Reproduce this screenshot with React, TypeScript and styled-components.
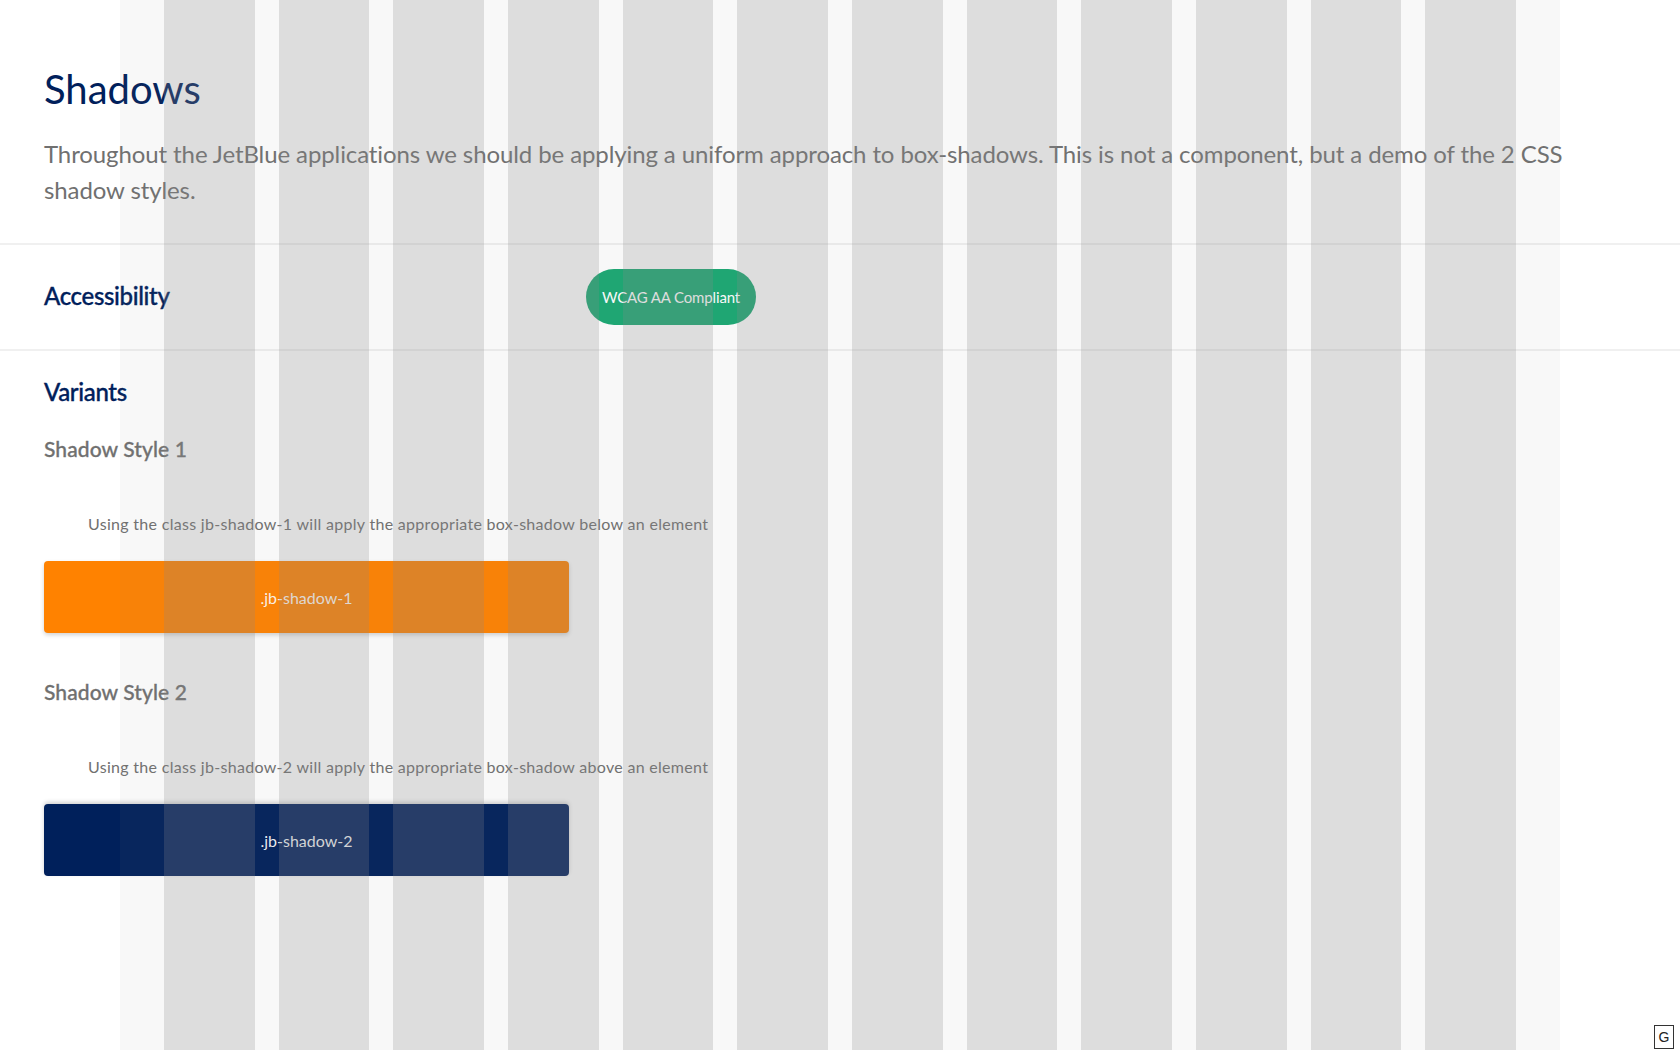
import * as React from 'react'
import styled, { createGlobalStyle } from 'styled-components'

const navy = '#00205b'
const gray = '#707070'

const GlobalStyle = createGlobalStyle`
  html, body {
    margin: 0;
    padding: 0;
    background: #fff;
    font-family: Lato, "Open Sans", "Liberation Sans", sans-serif;
  }
  * { box-sizing: border-box; }
`

const Page = styled.div`
  min-height: 1050px;
`

const Header = styled.header`
  padding: 64px 44px 35px 44px;
`

const Title = styled.h1`
  margin: 0;
  font-size: 40px;
  line-height: 50px;
  font-weight: 400;
  color: ${navy};
`

const Lead = styled.p`
  margin: 22px 0 0 0;
  max-width: 1560px;
  font-size: 24px;
  line-height: 36px;
  font-weight: 400;
  letter-spacing: -0.1px;
  color: ${gray};
`

const Divider = styled.hr`
  margin: 0;
  border: 0;
  height: 2px;
  background: #f0f0f0;
`

const AccessRow = styled.section`
  display: grid;
  grid-template-columns: 542px auto;
  align-items: center;
  padding: 24px 44px;
`

const SectionHeading = styled.h2<{ $lift?: boolean }>`
  margin: ${p => (p.$lift ? '-4px 0 0 0' : '0')};
  font-size: 24px;
  line-height: 29px;
  font-weight: 500;
  letter-spacing: -0.35px;
  -webkit-text-stroke: 0.35px ${navy};
  color: ${navy};
`

const Badge = styled.span`
  justify-self: start;
  display: inline-flex;
  align-items: center;
  height: 56px;
  padding: 0 16px;
  border-radius: 28px;
  background: #19a872;
  color: #fff;
  font-size: 15px;
  letter-spacing: -0.15px;
`

const Variants = styled.section`
  padding: 26px 44px 80px 44px;
`

const VariantBlock = styled.div<{ $first?: boolean }>`
  margin-top: ${p => (p.$first ? '31px' : '47px')};
`

const VariantTitle = styled.h3`
  margin: 0;
  font-size: 21px;
  line-height: 24px;
  font-weight: 500;
  letter-spacing: 0.1px;
  -webkit-text-stroke: 0.3px ${gray};
  color: ${gray};
`

const VariantText = styled.p`
  margin: 51px 0 25px 44px;
  font-size: 16px;
  line-height: 24px;
  letter-spacing: 0.3px;
  color: ${gray};
`

const ShadowBox = styled.div<{ $tone: 'orange' | 'navy' }>`
  width: 525px;
  height: 72px;
  border-radius: 4px;
  display: flex;
  align-items: center;
  justify-content: center;
  color: rgba(255, 255, 255, 0.95);
  font-size: 16px;
  background: ${p => (p.$tone === 'orange' ? '#ff8200' : navy)};
  box-shadow: ${p =>
    p.$tone === 'orange'
      ? '0 2px 4px rgba(0, 0, 0, 0.18)'
      : '0 -2px 4px rgba(0, 0, 0, 0.18)'};
`

// the column grid overlay that sits over the whole page
const GridOverlay = styled.div`
  position: fixed;
  inset: 0;
  display: flex;
  justify-content: center;
  pointer-events: none;
  z-index: 10;
`

const GridInner = styled.div`
  width: 1440px;
  height: 100%;
  padding: 0 44px;
  background: rgba(128, 128, 128, 0.06);
  display: grid;
  grid-template-columns: repeat(12, 1fr);
  column-gap: 24px;
`

const GridCol = styled.div`
  background: rgba(136, 136, 136, 0.245);
`

const GridToggle = styled.button`
  position: fixed;
  right: 6px;
  bottom: 1px;
  width: 20px;
  height: 24px;
  padding: 0;
  border: 1px solid #333;
  background: #fff;
  color: #222;
  font-family: "Liberation Sans", Arial, sans-serif;
  font-size: 14px;
  line-height: 22px;
  z-index: 20;
`

const variants = [
  {
    title: 'Shadow Style 1',
    text: 'Using the class jb-shadow-1 will apply the appropriate box-shadow below an element',
    label: '.jb-shadow-1',
    tone: 'orange' as const,
  },
  {
    title: 'Shadow Style 2',
    text: 'Using the class jb-shadow-2 will apply the appropriate box-shadow above an element',
    label: '.jb-shadow-2',
    tone: 'navy' as const,
  },
]

export default function App() {
  return (
    <Page>
      <GlobalStyle />
      <Header>
        <Title>Shadows</Title>
        <Lead>
          Throughout the JetBlue applications we should be applying a uniform approach to
          box-shadows. This is not a component, but a demo of the 2 CSS shadow styles.
        </Lead>
      </Header>
      <Divider />
      <AccessRow>
        <SectionHeading $lift>Accessibility</SectionHeading>
        <Badge>WCAG AA Compliant</Badge>
      </AccessRow>
      <Divider />
      <Variants>
        <SectionHeading>Variants</SectionHeading>
        {variants.map((v, i) => (
          <VariantBlock key={v.label} $first={i === 0}>
            <VariantTitle>{v.title}</VariantTitle>
            <VariantText>{v.text}</VariantText>
            <ShadowBox $tone={v.tone}>{v.label}</ShadowBox>
          </VariantBlock>
        ))}
      </Variants>
      <GridOverlay>
        <GridInner>
          {Array.from({ length: 12 }).map((_, i) => (
            <GridCol key={i} />
          ))}
        </GridInner>
      </GridOverlay>
      <GridToggle>G</GridToggle>
    </Page>
  )
}
